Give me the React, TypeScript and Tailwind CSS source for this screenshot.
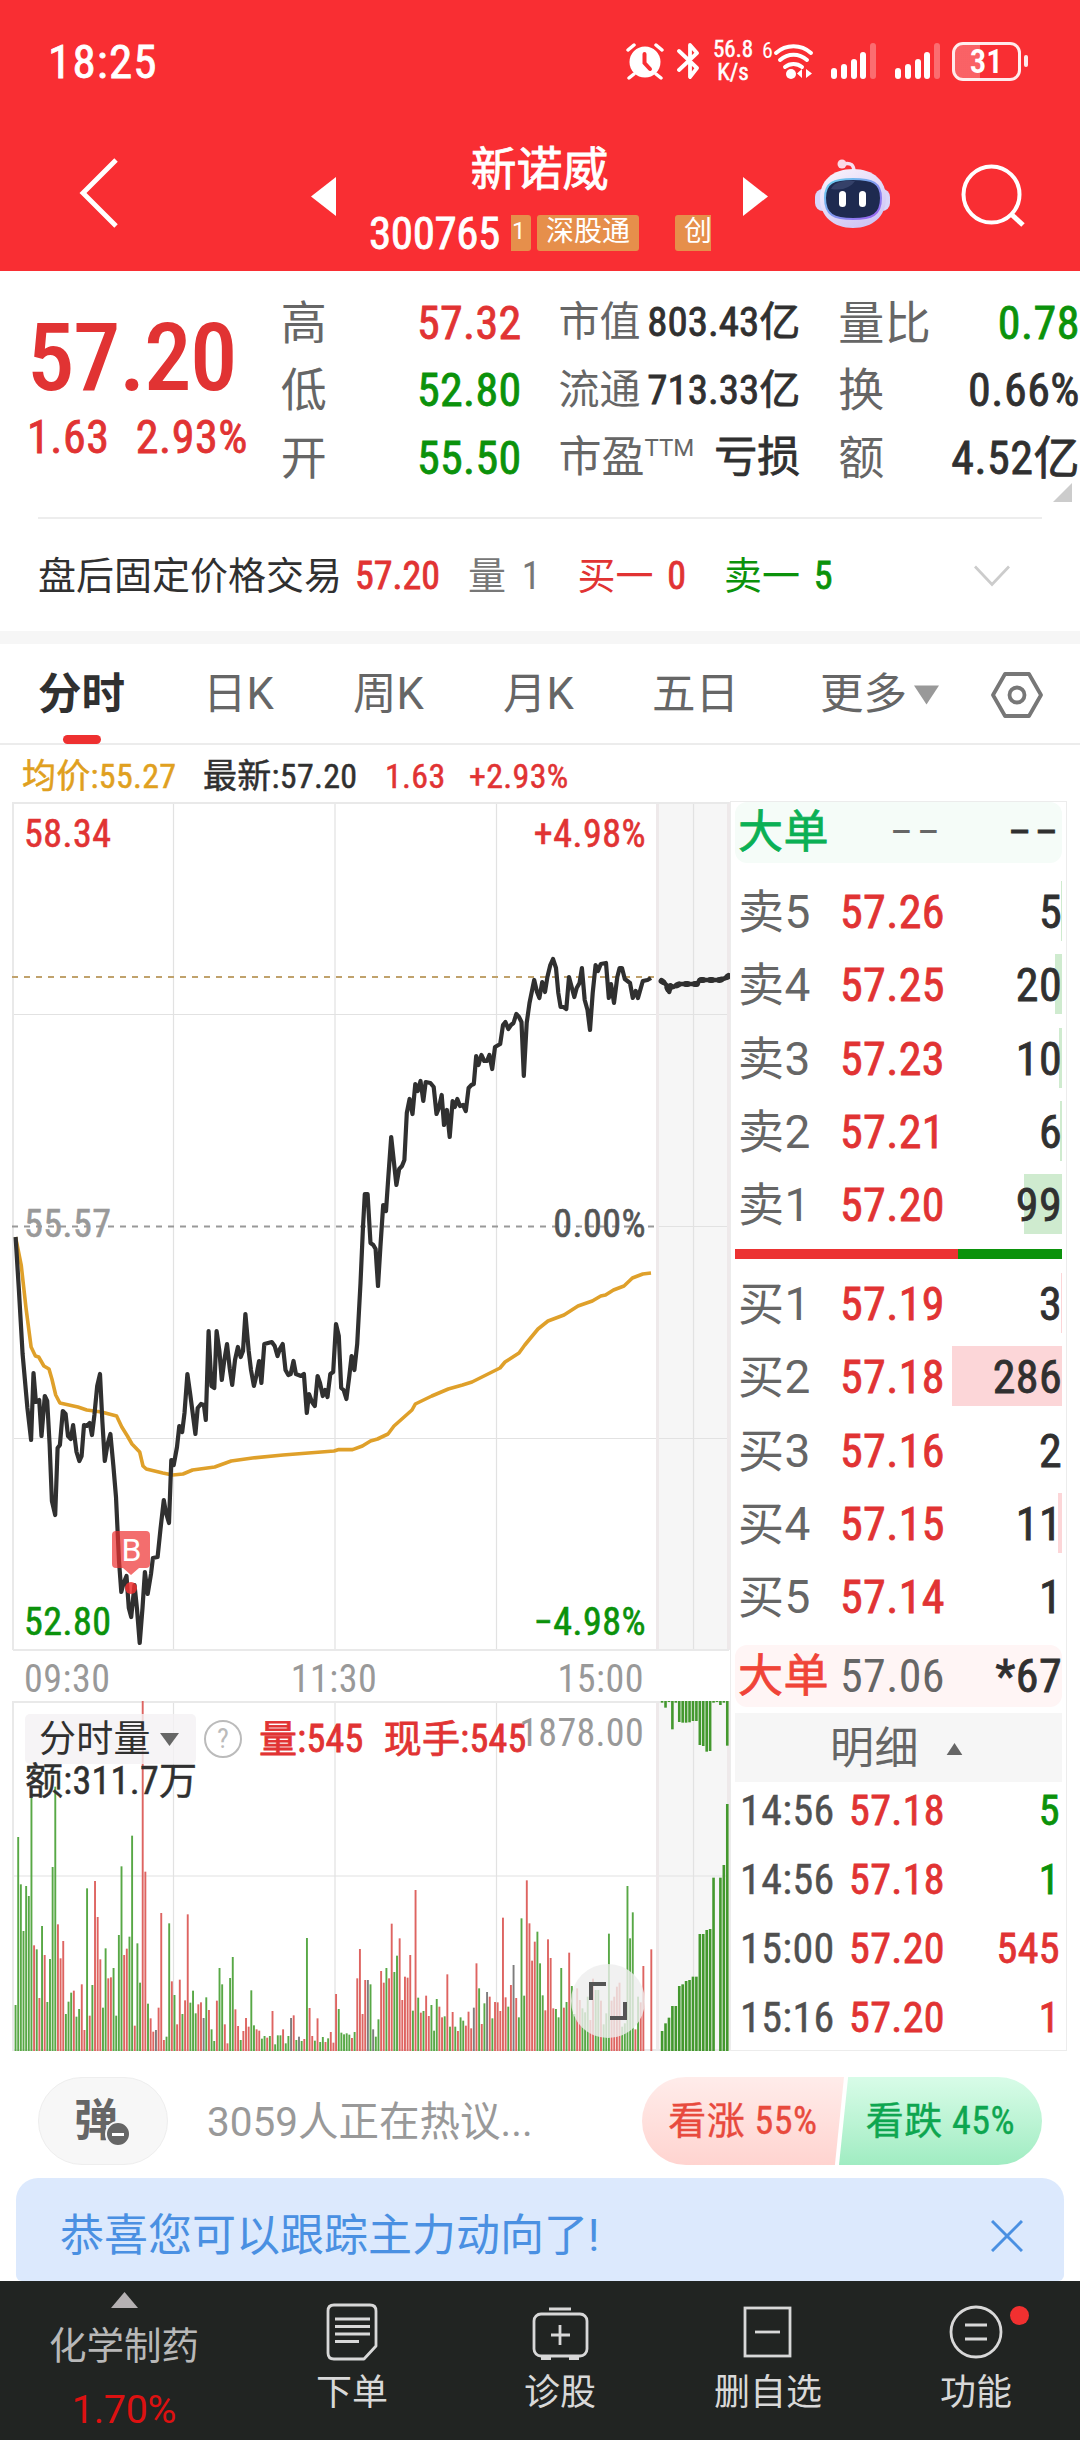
import type { ReactNode } from "react";
import clsx from "clsx";

const RED = "text-[#e13333]";
const GREEN = "text-[#0b920b]";
const DARK = "text-[#303030]";

// Slightly heavier than regular, lighter than medium
const THICK = "[-webkit-text-stroke:0.8px]";

const sells = [
  { label: "卖5", price: "57.26", qty: "5", bar: 1 },
  { label: "卖4", price: "57.25", qty: "20", bar: 7 },
  { label: "卖3", price: "57.23", qty: "10", bar: 3 },
  { label: "卖2", price: "57.21", qty: "6", bar: 2 },
  { label: "卖1", price: "57.20", qty: "99", bar: 38 },
];

const buys = [
  { label: "买1", price: "57.19", qty: "3", bar: 1 },
  { label: "买2", price: "57.18", qty: "286", bar: 110 },
  { label: "买3", price: "57.16", qty: "2", bar: 0 },
  { label: "买4", price: "57.15", qty: "11", bar: 4 },
  { label: "买5", price: "57.14", qty: "1", bar: 0 },
];

const ticks = [
  { time: "14:56", price: "57.18", qty: "5", up: false },
  { time: "14:56", price: "57.18", qty: "1", up: false },
  { time: "15:00", price: "57.20", qty: "545", up: true },
  { time: "15:16", price: "57.20", qty: "1", up: true },
];

const pricePoints =
  "15.6,1237 18.9,1290 22.6,1354 27.4,1408 31.1,1440 33.5,1373 35.9,1402 39.2,1400 41.5,1436 44.8,1396 47.2,1401 49.6,1444 51.9,1501 55.2,1515 57.6,1448 59.9,1445 62.8,1411 65.6,1414 68,1436 70.8,1439 73.1,1425 76.5,1452 79.3,1461 81.6,1456 84,1425 86.8,1426 89.7,1423 92,1435 94.4,1415 97.2,1386 100,1374 102.4,1422 104.8,1461 107.6,1444 110.4,1434 113.3,1465 116,1497 119,1561 121.3,1592 123.6,1583 126.5,1576 128.8,1608 131.2,1617 134.5,1585 136.9,1608 139.7,1643 142.5,1608 144.9,1572 147.7,1594 151,1574 152.9,1558 157.6,1557 160.5,1529 163.8,1500 166,1513 169,1523 171.3,1460 173.7,1465 177,1447 179.3,1426 182.2,1432 184.5,1413 187.4,1374 190.2,1394 195.4,1434 197.7,1408 201,1404 203.9,1405 205.8,1420 208.6,1331 211.4,1386 214.3,1388 216.6,1331 219.4,1351 221.8,1380 224.2,1361 227,1344 229.8,1369 232.2,1385 235,1360 237.9,1347 240.7,1357 243,1351 245.4,1314 248.7,1351 251,1370 253.9,1386 256.3,1376 259.1,1361 261.4,1383 264.3,1344 271.8,1342 274.7,1346 277.5,1356 279.8,1349 282.7,1344 285.5,1370 288.3,1375 290.7,1374 293.5,1361 295.9,1374 301,1376 303.9,1374 306.8,1413 309,1394 312,1402 314.8,1406 317.6,1376 320,1383 322.8,1396 325.2,1390 327.5,1397 330.3,1374 333.2,1372 336,1324 338.8,1336 341.2,1388 343.6,1390 346.4,1399 349.2,1377 351.6,1356 354.4,1370 357.2,1344 360.5,1283 362.9,1229 364.8,1194 367.6,1194 370.5,1243 373.3,1245 375.6,1249 378,1286 380.4,1247 383.2,1205 386,1211 388.4,1176 391.2,1137 396.4,1185 399.2,1169 402,1166 404.4,1160 406.8,1113 409.6,1099 412.5,1114 415.3,1084 417.7,1091 420.5,1081 423.3,1101 425.7,1082 430.4,1083 433.7,1087 436.5,1114 438.9,1108 441.7,1095 444,1125 446.9,1110 449.7,1137 452.6,1101 454.9,1107 457.3,1099 460,1106 463,1105 465.8,1111 468.6,1088 471.4,1085 473.8,1084 476.2,1056 478.5,1065 481.4,1055 484.2,1061 487,1061 489.4,1055 492.2,1069 495,1047 500.2,1044 503,1025 505.4,1022 508.3,1029 511,1025 513.5,1023 516.3,1014 519,1017 521.5,1022 523.8,1076 526.7,1023 529.5,1003 534.2,980 537,992 539.4,998 542.2,982 545,992 547.4,977 550.3,965 553,959 556,968 558.3,993 560.6,1007 563.5,1007 566.3,1009 569,977 574.3,997 576.7,988 579.5,983 581.9,968 584.7,1000 587.5,1010 590,1030 592.7,993 595.6,965 598,971 600.8,964 606,963 608.8,998 611,984 614,1003 617.3,977 619.6,968 622,968 624.8,979 630,983 632.8,998 635.7,991 638,998 642.8,981 647.5,980 651,978";

const averagePoints =
  "15.6,1237 21.2,1265 26,1308 31.1,1347 35.4,1356 38.7,1357 43.9,1366 49,1369 51.9,1379 55.7,1395 59.9,1403 77.9,1407 86.8,1410 101.5,1412 116.6,1416 121.8,1427 127.4,1436 132,1444 139.7,1452 143,1466 146.3,1469 162.8,1473 172.7,1475 183,1474 192.5,1470 214.7,1467 231.2,1461 252.5,1458 283,1455 334,1451 338.8,1449.6 352.5,1449.6 362.4,1446 370.5,1441 377.5,1439 388,1434 394,1426 412,1410 415.3,1404 431.8,1396 448.3,1389 462.5,1385 472,1382 500,1368 505,1362 519,1353 524.8,1345 538,1329 548,1321 564,1315 578,1306 592.3,1301 600.8,1296 605.5,1295 613.5,1290 624,1286 632.4,1278 642.8,1274 651,1273";

const afterHoursPoints =
  "661.6,981 664.5,983 666.4,985 669.2,992 670.5,986 673.4,987 679.6,984 697.5,984 699.4,980 719.7,980 725.8,978 728.6,976";

// One entry per minute: top of the bar in thirds of a pixel, then g(reen), r(ed) or k (flat)
const minuteVolumes =
  "945g 441g 583g 723g 588g 618g 300g 766r 778g 924r 708g 795r 936g 807g 531g 290g 703r 805r 753r 972g 935g 908g 902r 980g 957g 883r 1020r 595g 977r 885g 573r 681r 808r 953g 775g 865r 862r 834g 977g 735g 529g 795r 776r 740g 437g 1007r 760g 878g 33r 545r 941g 985r 1025r 1020k 953r 669r 1050r 1040g 700g 874r 915g 1003r 869r 972g 931r 673r 938g 902g 970g 943r 937r 984k 922g 960r 1018g 1053g 932r 834g 883g 1003r 1060r 864g 801g 958r 1008r 1050g 1023r 984r 1010r 901g 1006g 1018r 1022r 1046g 1038g 1043r 1038g 963r 1063g 1036g 1036g 1018r 1060g 1038g 984k 976r 1050g 1040k 1053g 1047r 744g 954r 1038r 1052g 985r 1056g 1041g 1056r 1045g 1026r 1058r 912r 957g 1028g 1033g 1030g 1034g 1044r 1026g 865r 777r 972r 870r 870k 883g 1018k 1040g 988g 843r 878r 834g 865r 701r 846g 797g 745r 930r 860r 863r 795r 962g 600r 923g 968r 963g 917r 978r 945g 1022g 927g 950r 982r 979g 853r 1010g 966r 1010g 1023r 982g 992g 1007r 965r 1015r 953k 820r 895g 1002r 940g 906k 920r 985g 936r 937r 963r 683r 922r 950g 885r 825k 924r 982g 685g 917g 571r 700r 812r 755r 725g 820g 916g 961r 748r 804r 955r 957g 982g 834g 953r 936g 788r 888g 972g 895r 930r 955g 967g 920g 990r 866r 900g 900g 932r 1003g 970g 731g 932r 920r 890r 878r 1010g 1000g 588g 745g 667g 1018r 920g 937r 828r 1083k 1083k 778r";

// Auction bars: [hanging from the top, rising from the bottom], same unit
const auctionVolumes = [
  [38, 1023], [53, 1000], [36, 983], [118, 948], [38, 948], [96, 888], [98, 883],
  [98, 873], [97, 870], [93, 860], [93, 860], [165, 732], [168, 732], [185, 720],
  [183, 717], [38, 563], [36, 1083], [45, 563], [38, 525], [167, 342],
];

const barColors: Record<string, string> = { g: "#58a846", r: "#de6461", k: "#7d7d7d" };

function StatusBar() {
  return (
    <div className="flex h-[122px] items-center pl-[48px] text-white">
      <span className={clsx("w-[577px] text-[47px] leading-none tracking-[1.200px] font-stretch-[87%]", THICK)}>18:25</span>
      <svg className="mr-[12px] h-[38px] w-[40px]" viewBox="0 0 40 38" fill="none" stroke="#fff">
        <circle cx="20" cy="20" r="15.5" fill="#fff" stroke="none" />
        <path d="M3 8l6-5M37 8l-6-5M9 32l-5 4M31 32l5 4" strokeWidth="3.5" strokeLinecap="round" />
        <path d="M19.500 12v9l5.500 6" stroke="#f92e33" strokeWidth="4" strokeLinecap="round" />
      </svg>
      <svg className="mr-[10px] h-[38px] w-[24px]" viewBox="0 0 24 38" fill="none" stroke="#fff" strokeWidth="3.800" strokeLinejoin="round" strokeLinecap="round">
        <path d="M2 9l18 17-7 9V3l7 8L2 28" />
      </svg>
      <div className="mr-[7px] w-[44px] text-center text-[23px] leading-[23px] font-stretch-[87%] [-webkit-text-stroke:0.5px]">
        <div>56.8</div>
        <div>K/s</div>
      </div>
      <span className="mb-[20px] text-[22px] leading-none font-stretch-[85%]">6</span>
      <svg className="mr-[16px] h-[38px] w-[42px]" viewBox="0 0 42 38" fill="none" stroke="#fff" strokeWidth="4" strokeLinecap="round">
        <path d="M3 11c10-9 25-9 35 0M7 18c8-7 19-7 27 0M12 25c5-4 12-4 17 0" />
        <circle cx="18" cy="32" r="5" fill="#fff" stroke="none" />
        <path d="M29 27v9l-5-4.500zM33 27v9l6-4.500z" fill="#fff" stroke="none" />
      </svg>
      {[0, 1].map((sim) => (
        <svg key={sim} className="mr-[18px] h-[38px] w-[46px]" viewBox="0 0 46 38" fill="#fff">
          <rect x="0" y="26" width="6" height="11" rx="3" />
          <rect x="10" y="22" width="6" height="15" rx="3" />
          <rect x="20" y="17" width="6" height="20" rx="3" />
          <rect x="29" y="10" width="6" height="27" rx="3" />
          <rect x="39" y="1" width="6" height="36" rx="3" opacity="0.3" />
        </svg>
      ))}
      <div className="relative -ml-[7px] flex h-[39px] w-[69px] items-center justify-center rounded-[11px] border-[3px] border-white/90 bg-linear-to-r from-white/25 from-40% to-transparent to-40%">
        <span className="text-[33px] leading-none font-semibold font-stretch-[85%]">31</span>
        <span className="absolute top-[10px] -right-[10px] h-[12px] w-[4px] rounded-full bg-white/90" />
      </div>
    </div>
  );
}

function Robot() {
  return (
    <svg className="h-[70px] w-[76px]" viewBox="0 0 76 70">
      <defs>
        <linearGradient id="shell" x1="0" y1="0" x2="0.600" y2="1">
          <stop offset="0" stopColor="#fdf5fc" />
          <stop offset="1" stopColor="#cfc6f5" />
        </linearGradient>
        <linearGradient id="rim" x1="0" y1="0" x2="1" y2="1">
          <stop offset="0" stopColor="#67d5ee" />
          <stop offset="1" stopColor="#9a5cf0" />
        </linearGradient>
      </defs>
      <path d="M28 5c8-2 11 1 11 8" fill="none" stroke="#f7dff0" strokeWidth="3.500" />
      <circle cx="27" cy="5" r="4.500" fill="#fbd9e6" />
      <rect x="0" y="30" width="75" height="22" rx="8" fill="#d9d6fa" />
      <path d="M38 10c21 0 33 12 33 29 0 18-13 30-33 30S5 57 5 39c0-17 12-29 33-29z" fill="url(#shell)" />
      <path d="M38 20c20 0 28 4 28 19 0 17-9 21-28 21S10 56 10 39c0-15 8-19 28-19z" fill="#1e2a50" stroke="url(#rim)" strokeWidth="2" />
      <path d="M16 30c3-7 12-9 24-8-4 6-12 10-24 8z" fill="#44527a" opacity="0.600" />
      <rect x="24" y="32" width="7" height="16" rx="3.500" fill="#fff" />
      <rect x="44" y="32" width="7" height="16" rx="3.500" fill="#fff" />
    </svg>
  );
}

function TitleBar() {
  return (
    <div className="flex h-[149px] text-white">
      <svg className="mt-[36px] ml-[79px] h-[70px] w-[41px]" viewBox="0 0 42 72" fill="none" stroke="#fff" strokeWidth="5">
        <path d="M38 2L4 36l34 34" />
      </svg>
      <svg className="mt-[55px] ml-[191px] h-[39px] w-[25px]" viewBox="0 0 25 39" fill="#fff">
        <path d="M0 19.500L25 0v39z" />
      </svg>
      <div className="flex w-[407px] flex-col items-center">
        <h1 className={clsx("mt-[24px] text-[46px] leading-none", THICK)}>新诺威</h1>
        <div className="mt-[18px] flex h-[46px] w-full items-center pl-[33px]">
          <span className={clsx("w-[142px] text-[45px] leading-none tracking-[-0.400px] font-stretch-[87%]", THICK)}>300765</span>
          <div className="flex h-[36px] w-[200px] overflow-hidden text-[28px] leading-[33px]">
            <span className="w-[20px] shrink-0 rounded-r-[3px] bg-[#e68f4b] pl-[1px] text-[24px]">1</span>
            <span className="ml-[6px] w-[102px] shrink-0 rounded-[3px] bg-[#e68f4b] text-center">深股通</span>
            <span className="ml-[36px] w-[48px] shrink-0 rounded-[3px] bg-[#e68f4b] pl-[9px]">创</span>
          </div>
        </div>
      </div>
      <svg className="mt-[55px] h-[39px] w-[25px]" viewBox="0 0 25 39" fill="#fff">
        <path d="M25 19.500L0 0v39z" />
      </svg>
      <div className="mt-[37px] ml-[47px]">
        <Robot />
      </div>
      <svg className="mt-[42px] ml-[70px] h-[64px] w-[64px]" viewBox="0 0 64 64" fill="none" stroke="#fff" strokeWidth="4">
        <circle cx="30.500" cy="30.500" r="28" />
        <path d="M50 50l12 11" strokeWidth="5" />
      </svg>
    </div>
  );
}

function QuoteRow({ label, className, children }: { label: ReactNode; className?: string; children: ReactNode }) {
  return (
    <div className={clsx("flex h-[67.500px] items-center justify-between", className)}>
      <span className="text-[#666]">{label}</span>
      <span className={THICK}>{children}</span>
    </div>
  );
}

function Quote() {
  return (
    <section className="relative flex h-[246px] pt-[18px] leading-none">
      <div className={clsx("w-[281px] pl-[27px]", RED)}>
        <div className="mt-[17px] text-[95px] leading-[104px] font-medium tracking-[-1.500px] font-stretch-[79%]">57.20</div>
        <div className={clsx("mt-[4px] flex gap-[26px] text-[46px] tracking-[0.600px] font-stretch-[87%]", THICK)}>
          <span>1.63</span>
          <span>2.93%</span>
        </div>
      </div>
      <div className="w-[241px] text-[46px] tracking-[0.300px] font-stretch-[87%]">
        <QuoteRow label="高" className={RED}>57.32</QuoteRow>
        <QuoteRow label="低" className={GREEN}>52.80</QuoteRow>
        <QuoteRow label="开" className={GREEN}>55.50</QuoteRow>
      </div>
      <div className={clsx("ml-[37px] w-[242px] text-[41px] font-stretch-[85%]", DARK)}>
        <QuoteRow label="市值">803.43亿</QuoteRow>
        <QuoteRow label="流通">713.33亿</QuoteRow>
        <QuoteRow
          className="text-[43px]"
          label={
            <>
              市盈<span className="relative -top-[16px] text-[24px] font-stretch-[100%]">TTM</span>
            </>
          }
        >
          亏损
        </QuoteRow>
      </div>
      <div className={clsx("ml-[38px] w-[242px] text-[46px] tracking-[0.500px] font-stretch-[87%]", DARK)}>
        <QuoteRow label="量比">
          <span className={GREEN}>0.78</span>
        </QuoteRow>
        <QuoteRow label="换">0.66%</QuoteRow>
        <QuoteRow label="额">4.52亿</QuoteRow>
      </div>
      <svg className="absolute right-[8px] bottom-[15px] h-[19px] w-[19px]" viewBox="0 0 19 19" fill="#ccc">
        <path d="M19 0v19H0z" />
      </svg>
    </section>
  );
}

function AfterHours() {
  return (
    <section className="mx-[38px] flex h-[114px] items-center border-t-2 border-[#ededed] pt-[2px] text-[38px] leading-none font-stretch-[86%]">
      <span className={DARK}>盘后固定价格交易</span>
      <span className={clsx("ml-[13px]", RED, THICK)}>57.20</span>
      <span className="ml-[28px] text-[#777]">量 <span className="ml-[7px]">1</span></span>
      <span className={clsx("ml-[37px]", RED)}>买一 <span className={clsx("ml-[5px]", THICK)}>0</span></span>
      <span className={clsx("ml-[38px]", GREEN)}>卖一 <span className={clsx("ml-[5px]", THICK)}>5</span></span>
      <svg className="mr-[32px] ml-auto h-[22px] w-[36px]" viewBox="0 0 38 22" fill="none" stroke="#ccc" strokeWidth="3">
        <path d="M1 1l18 19L37 1" />
      </svg>
    </section>
  );
}

function Tabs() {
  return (
    <nav className="flex h-[101px] items-center border-b-2 border-[#ececec] pt-[2px] text-[43.500px] leading-none text-[#666]">
      <span className="relative ml-[38px] w-[165px] font-bold text-[#303030]">
        分时
        <i className="absolute -bottom-[28px] left-[25px] h-[9px] w-[38px] rounded-full bg-[#ee3030]" />
      </span>
      <span className="w-[150px]">日K</span>
      <span className="w-[150px]">周K</span>
      <span className="w-[149px]">月K</span>
      <span className="w-[168px]">五日</span>
      <span>更多</span>
      <svg className="ml-[7px] h-[20px] w-[25px]" viewBox="0 0 26 20" fill="#999">
        <path d="M0 0h26L13 20z" />
      </svg>
      <svg className="mr-[37px] ml-auto h-[48px] w-[52px]" viewBox="0 0 52 48" fill="none" stroke="#777" strokeWidth="3.800" strokeLinejoin="round">
        <path d="M14 3h24l12 21-12 21H14L2 24z" />
        <circle cx="26" cy="24" r="7.500" />
      </svg>
    </nav>
  );
}

function Legend() {
  return (
    <div className="flex h-[55px] items-center pt-[7px] pl-[22px] text-[34px] leading-none tracking-[0.300px] font-stretch-[85%] [-webkit-text-stroke:0.5px]">
      <span className="w-[181px] text-[#e0a020]">均价:55.27</span>
      <span className={clsx("w-[182px]", DARK)}>最新:57.20</span>
      <span className={clsx("w-[84px]", RED)}>1.63</span>
      <span className={RED}>+2.93%</span>
    </div>
  );
}

function PriceChart() {
  return (
    <div className="relative h-[849px]">
      <svg className="block h-[849px] w-[730px]" viewBox="0 802 730 849" fill="none">
        <rect x="658" y="803" width="71" height="847" fill="#f6f6f6" />
        <g stroke="#e2e2e2" strokeWidth="1.200">
          <path d="M173.500 802v848M335 802v848M496.500 802v848M693.500 802v848" />
          <path d="M12 1014.500h717M12 1438.500h717M658 1226.500h71" />
        </g>
        <path d="M657.500 802v848M728.500 802v848" stroke="#eee9ea" strokeWidth="3" />
        <path d="M13 1650V803h716M13 1650h716" stroke="#e9e9e9" strokeWidth="2" />
        <path d="M12 977h645" stroke="#c0a26c" strokeWidth="2" strokeDasharray="6 6" />
        <path d="M12 1226.500h645" stroke="#999" strokeWidth="2" strokeDasharray="6 6" />
        <polyline points={averagePoints} stroke="#dfa02a" strokeWidth="3.600" strokeLinejoin="round" />
        <polyline points={pricePoints} stroke="#303030" strokeWidth="4.200" strokeLinejoin="round" />
        <polyline points={afterHoursPoints} stroke="#303030" strokeWidth="6" strokeLinejoin="round" strokeLinecap="round" strokeDasharray="2 7" />
        <polyline points={afterHoursPoints} stroke="#303030" strokeWidth="4.500" strokeLinejoin="round" strokeLinecap="round" />
        <g fill="#ee3030">
          <path d="M116 1531h30a4 4 0 014 4v29a4 4 0 01-4 4h-7l-8 7-8-7h-7a4 4 0 01-4-4v-29a4 4 0 014-4z" opacity="0.700" />
          <circle cx="131" cy="1588" r="6" opacity="0.850" />
        </g>
        <text x="131.500" y="1561" fill="#fff" fontSize="32" textAnchor="middle">B</text>
      </svg>
      <div className="absolute inset-0 flex flex-col justify-between pt-[13px] pr-[84px] pb-[10px] pl-[24px] text-[38px] leading-none tracking-[0.500px] font-stretch-[87%] [-webkit-text-stroke:0.6px]">
        <div className={clsx("flex justify-between", RED)}>
          <span>58.34</span>
          <span>+4.98%</span>
        </div>
        <div className="-mt-[8px] flex justify-between text-[#999]">
          <span>55.57</span>
          <span className="text-[#555]">0.00%</span>
        </div>
        <div className={clsx("flex justify-between", GREEN)}>
          <span>52.80</span>
          <span>−4.98%</span>
        </div>
      </div>
    </div>
  );
}

function VolumeChart() {
  return (
    <div className="relative h-[350px]">
      <svg className="block h-[350px] w-[730px]" viewBox="0 1701 730 350" fill="none">
        <rect x="658" y="1702" width="71" height="348" fill="#f6f6f6" />
        <path d="M173.500 1701v350M335 1701v350M496.500 1701v350M693.500 1701v350M12 1876h717" stroke="#e2e2e2" strokeWidth="1.200" />
        <path d="M657.500 1701v350M728.500 1701v350" stroke="#eee9ea" strokeWidth="3" />
        <path d="M13 1702h716M13 1701v350M13 2050h716" stroke="#e9e9e9" strokeWidth="2" />
        {minuteVolumes.split(" ").map((entry, i) => {
          const top = 1690 + parseInt(entry) / 3;
          return <rect key={i} x={14.6 + i * 2.649} y={top} width="1.900" height={2051 - top} fill={barColors[entry.slice(-1)]} />;
        })}
        {auctionVolumes.map(([hang, rise], i) => (
          <g key={i} fill="#43982e">
            <rect x={660.8 + i * 3.43} y="1701" width="2.600" height={hang / 3 - 11} />
            <rect x={660.8 + i * 3.43} y={1690 + rise / 3} width="2.600" height={361 - rise / 3} />
          </g>
        ))}
      </svg>
      <div className="absolute inset-x-0 top-[13px] pl-[25px] text-[38px] leading-none tracking-[0.300px] font-stretch-[87%]">
        <div className="flex h-[50px] items-center">
          <div className={clsx("flex h-[50px] w-[171px] items-center rounded-[5px] bg-[#f4f1f4]/80 pl-[14px] text-[37px]", DARK)}>
            分时量
            <svg className="ml-[9px] h-[13px] w-[19px]" viewBox="0 0 19 13" fill="#666">
              <path d="M0 0h19L9.500 13z" />
            </svg>
          </div>
          <span className="ml-[8px] flex size-[38px] items-center justify-center rounded-full border-[2.500px] border-[#bbb] text-[28px] text-[#bbb]">?</span>
          <span className={clsx("ml-[17px]", RED, THICK)}>量:545</span>
          <span className={clsx("ml-[20px]", RED, THICK)}>现手:545</span>
        </div>
        <div className={clsx("-mt-[2px] [-webkit-text-stroke:0.5px]", DARK)}>额:311.7万</div>
        <span className="absolute top-0 right-[86px] text-[#999]">1878.00</span>
      </div>
      <div className="absolute top-[263px] left-[571px] flex size-[74px] items-center justify-center rounded-full bg-[#eee]/80">
        <svg className="size-[40px]" viewBox="0 0 40 40" fill="none" stroke="#555" strokeWidth="4">
          <path d="M3 19V3h15M37 21v16H22" />
        </svg>
      </div>
    </div>
  );
}

type Level = { label: string; price: string; qty: string; bar: number };

function Levels({ rows, barClass }: { rows: Level[]; barClass: string }) {
  return (
    <div className="flex shrink-0 flex-col gap-[13.250px]">
      {rows.map((row) => (
        <div key={row.label} className="relative flex h-[60px] items-center pt-[2px] pl-[3px]">
          <i className={clsx("absolute inset-y-0 right-0", barClass)} style={{ width: row.bar }} />
          <span className="w-[102px] text-[#666] font-stretch-[100%]">{row.label}</span>
          <span className={clsx(RED, THICK)}>{row.price}</span>
          <span className={clsx("relative ml-auto", DARK, THICK)}>{row.qty}</span>
        </div>
      ))}
    </div>
  );
}

function OrderBook() {
  return (
    <aside className="flex w-[337px] flex-col border border-[#ececec] px-[4px] text-[46px] leading-none tracking-[0.400px] font-stretch-[87%]">
      <div className="flex h-[61px] shrink-0 items-center rounded-[12px] bg-[#f5fcf8] pl-[3px] text-[#0bb055]">
        <span className={clsx("w-[152px] text-[45px]", THICK)}>大单</span>
        <span className="text-[40px] tracking-[4px] text-[#666]">––</span>
        <span className={clsx("ml-auto text-[40px] tracking-[4px] text-[#303030]", THICK)}>––</span>
      </div>
      <div className="mt-[18px] shrink-0">
        <Levels rows={sells} barClass="bg-[#cfebcf]" />
      </div>
      <div className="my-[14.500px] flex h-[10px] shrink-0 bg-[#0b920b]">
        <i className="w-[223px] bg-[#ec3232]" />
      </div>
      <Levels rows={buys} barClass="bg-[#fcd6d8]" />
      <div className="mt-[19px] flex h-[62px] shrink-0 items-center rounded-[12px] bg-[#fff5f5] pl-[3px] text-[#f04438]">
        <span className={clsx("w-[102px] text-[45px]", THICK)}>大单</span>
        <span className="text-[#666]">57.06</span>
        <span className={clsx("ml-auto text-[#303030]", THICK)}>*67</span>
      </div>
      <div className="mt-[6px] flex h-[69px] shrink-0 items-center bg-[#f6f6f6] pt-[2px] pl-[95px] text-[44px] text-[#666]">
        明细
        <svg className="ml-[27px] h-[12px] w-[17px]" viewBox="0 0 17 13" fill="#666">
          <path d="M0 13h17L8.500 0z" />
        </svg>
      </div>
      <div className="-mt-[6px] h-0 text-[42px]">
        {ticks.map((tick, i) => (
          <div key={i} className="flex h-[69px] items-center pr-[2px] pl-[5px]">
            <span className="w-[109px] text-[#505050] [-webkit-text-stroke:0.4px]">{tick.time}</span>
            <span className={clsx(RED, THICK)}>{tick.price}</span>
            <span className={clsx("ml-auto", THICK, tick.up ? RED : GREEN)}>{tick.qty}</span>
          </div>
        ))}
      </div>
    </aside>
  );
}

function Discussion() {
  return (
    <section className="mt-[26px] flex h-[88px] items-center pr-[38px] pl-[38px] leading-none">
      <div className="relative flex h-full w-[130px] items-center rounded-full border border-[#eee] bg-[#f7f7f7] pl-[35px] text-[44px] font-bold text-[#666]">
        弹
        <i className="absolute top-[43px] left-[66px] flex size-[26px] items-center justify-center rounded-full border-2 border-[#f7f7f7] bg-[#666]">
          <b className="h-[3px] w-[12px] bg-white" />
        </i>
      </div>
      <span className="ml-[39px] pt-[2px] text-[40.500px] text-[#999]">3059人正在热议...</span>
      <div className="ml-auto flex h-full w-[400px] overflow-hidden rounded-full text-[38px] tracking-[0.500px] font-stretch-[87%] [-webkit-text-stroke:0.4px]">
        <div className="flex w-[202px] items-center justify-center bg-linear-to-b from-[#ffecea] to-[#ffd4d0] text-[#e84a3d] [clip-path:polygon(0_0,100%_0,95.500%_100%,0_100%)]">看涨 55%</div>
        <div className="-ml-[5px] flex flex-1 items-center justify-center bg-linear-to-b from-[#d8fce8] to-[#a0ecc2] text-[#0ea650] [clip-path:polygon(4.500%_0,100%_0,100%_100%,0_100%)]">看跌 45%</div>
      </div>
    </section>
  );
}

function Banner() {
  return (
    <section className="mx-[16px] mt-[13px] flex h-[103px] items-center justify-between rounded-t-[22px] rounded-b-[6px] bg-[#dce9fd] pt-[12px] pr-[41px] pl-[44px] text-[44px] leading-none text-[#4a90e2]">
      恭喜您可以跟踪主力动向了!
      <svg className="h-[32px] w-[32px]" viewBox="0 0 32 32" stroke="#4a90e2" strokeWidth="3">
        <path d="M1 1l30 30M31 1L1 31" />
      </svg>
    </section>
  );
}

function NavItem({ label, dot, children }: { label: string; dot?: boolean; children: ReactNode }) {
  return (
    <div className="relative flex w-[208px] flex-col items-center text-[36px] leading-none">
      <svg className="mt-[19px] h-[64px] w-[64px]" viewBox="0 0 64 64" fill="none" stroke="#d8d8d8" strokeWidth="2.800">
        {children}
      </svg>
      <span className="mt-[11px]">{label}</span>
      {dot && <i className="absolute top-[25px] right-[51px] size-[19px] rounded-full bg-[#f23030]" />}
    </div>
  );
}

function BottomNav() {
  return (
    <nav className="flex h-[159px] bg-[#212422] text-[#d8d8d8]">
      <div className="flex w-[248px] flex-col items-center leading-none">
        <svg className="mt-[11px] h-[16px] w-[27px]" viewBox="0 0 27 16" fill="#b5b1b3">
          <path d="M0 16h27L13.500 0z" />
        </svg>
        <span className="mt-[20px] text-[37.500px] text-[#b8b8b8]">化学制药</span>
        <span className="mt-[24px] text-[39.500px] tracking-[-0.300px] text-[#dd1111]">1.70%</span>
      </div>
      <NavItem label="下单">
        <path d="M14 5h36q6 0 6 6v35L44 59H14q-6 0-6-6V11q0-6 6-6z" strokeLinejoin="round" />
        <path d="M15 19h35M15 26.500h35M15 34h35M15 41.500h24" />
      </NavItem>
      <NavItem label="诊股">
        <rect x="6" y="14" width="53" height="42" rx="7" />
        <path d="M21 9h22M32 25v20M23 35h19" />
        <path d="M13 58h10M41 58h10" strokeWidth="4" />
      </NavItem>
      <NavItem label="删自选">
        <rect x="9" y="8" width="45" height="48" />
        <path d="M19 32h25" />
      </NavItem>
      <NavItem label="功能" dot>
        <circle cx="32" cy="32" r="25" />
        <path d="M21 25h22M21 39h22" />
      </NavItem>
    </nav>
  );
}

export default function App() {
  return (
    <div className="w-[1080px] overflow-hidden bg-white font-['Roboto','Noto_Sans_CJK_SC',sans-serif]">
      <header className="h-[271px] bg-[#f92e33]">
        <StatusBar />
        <TitleBar />
      </header>
      <Quote />
      <AfterHours />
      <div className="h-[13px] bg-[#f6f6f6]" />
      <Tabs />
      <Legend />
      <main className="mt-px flex h-[1250px]">
        <div className="w-[730px] pt-px">
          <PriceChart />
          <div className="flex h-[50px] items-center justify-between pt-[5px] pr-[86px] pl-[24px] text-[38px] leading-none tracking-[0.500px] text-[#999] font-stretch-[87%]">
            <span>09:30</span>
            <span>11:30</span>
            <span>15:00</span>
          </div>
          <VolumeChart />
        </div>
        <OrderBook />
      </main>
      <Discussion />
      <Banner />
      <BottomNav />
    </div>
  );
}
